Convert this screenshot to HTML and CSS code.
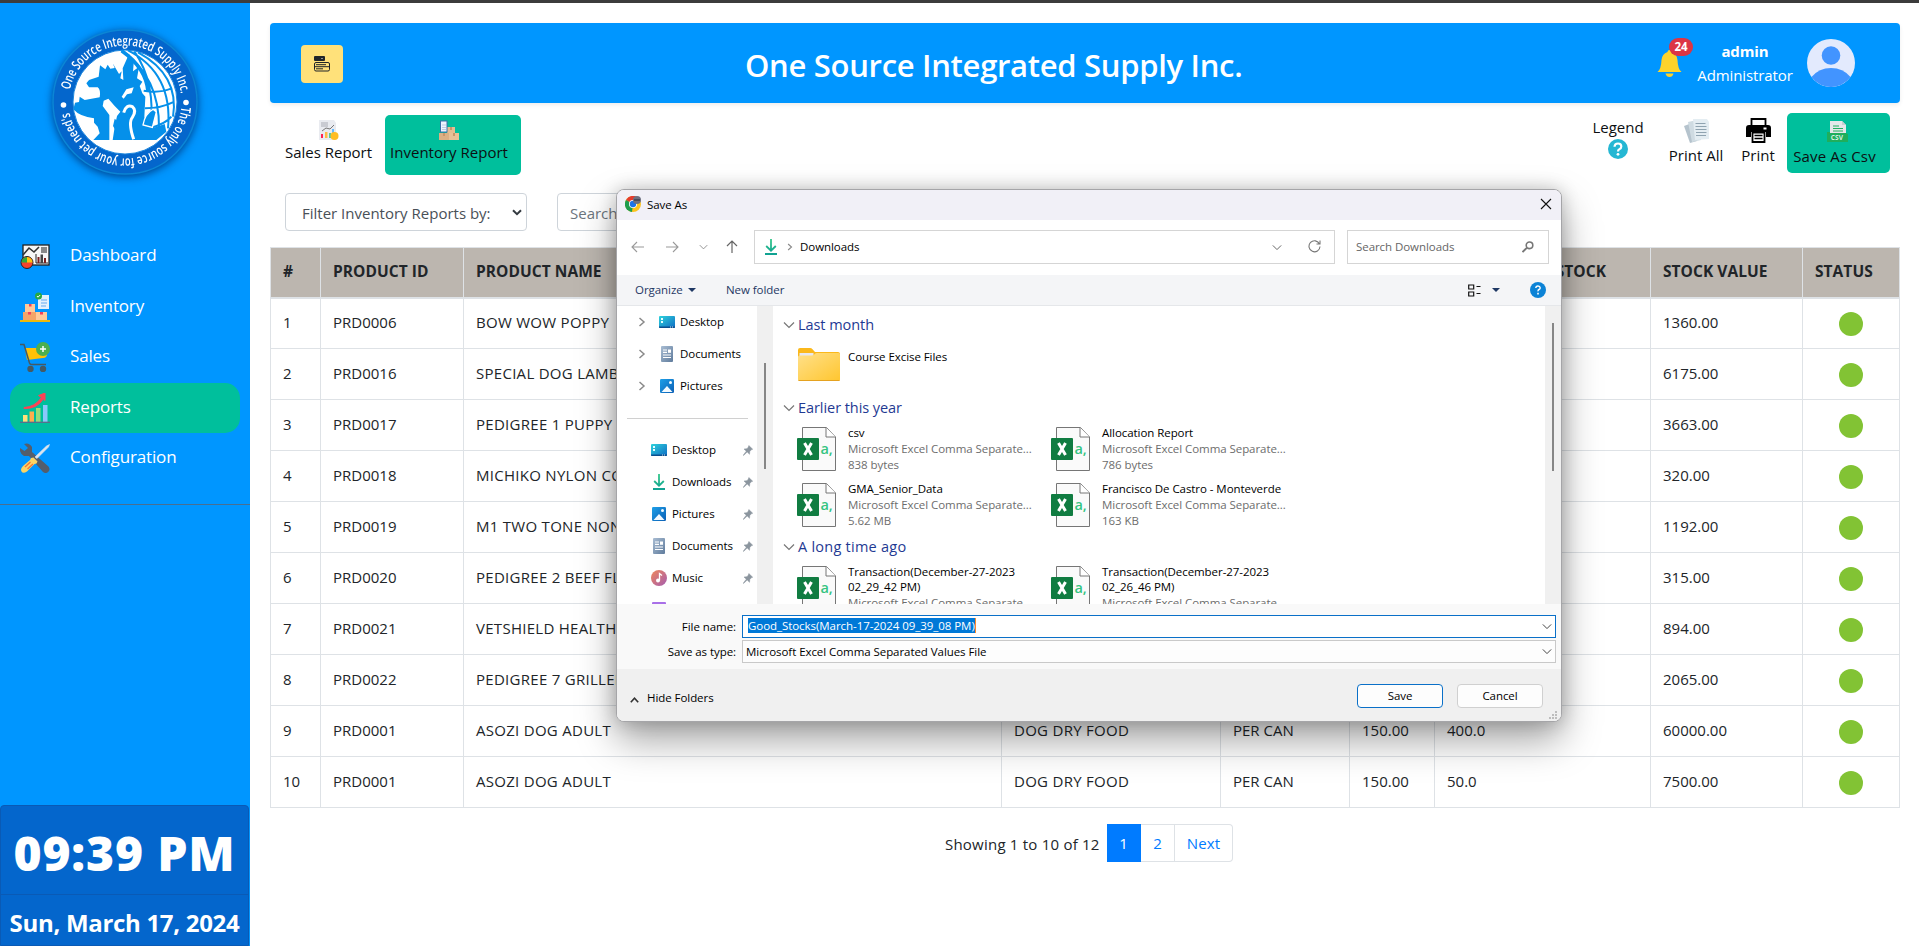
FILE: index.html
```html
<!DOCTYPE html>
<html lang="en">
<head>
<meta charset="utf-8">
<title>One Source Integrated Supply Inc.</title>
<link rel="stylesheet" href="styles.css">
</head>
<body>
<svg class="defs" width="0" height="0">
  <defs>
    <linearGradient id="g-desk" x1="0" y1="0" x2="1" y2="1"><stop offset="0" stop-color="#2fd3dc"/><stop offset="1" stop-color="#0f6cc4"/></linearGradient>
    <linearGradient id="g-doc" x1="0" y1="0" x2="1" y2="1"><stop offset="0" stop-color="#a9bdd3"/><stop offset="1" stop-color="#5f7b9c"/></linearGradient>
    <linearGradient id="g-pic" x1="0" y1="0" x2="1" y2="1"><stop offset="0" stop-color="#1ea0e8"/><stop offset="1" stop-color="#0c5fb5"/></linearGradient>
    <linearGradient id="g-mus" x1="0" y1="0" x2="1" y2="1"><stop offset="0" stop-color="#f0885a"/><stop offset="1" stop-color="#a55cb0"/></linearGradient>
    <linearGradient id="g-fold" x1="0" y1="0" x2="1" y2="1"><stop offset="0" stop-color="#ffe08a"/><stop offset="1" stop-color="#ffc62f"/></linearGradient>
    <linearGradient id="g-down" x1="0" y1="0" x2="0" y2="1"><stop offset="0" stop-color="#35c88a"/><stop offset="1" stop-color="#10a292"/></linearGradient>
  </defs>
  <symbol id="i-desk" viewBox="0 0 16 16"><rect y="2" width="16" height="12" rx="1" fill="url(#g-desk)"/><path d="M2 4h2v2H2zM2 7h2v2H2z" fill="#e6ffff"/><path d="M0 12.5h16V13a1 1 0 0 1-1 1H1a1 1 0 0 1-1-1z" fill="#0a4f8f"/><path d="M11 13h1M13 13h1" stroke="#fff" stroke-width=".8"/></symbol>
  <symbol id="i-doc" viewBox="0 0 16 16"><rect x="2" width="12" height="16" rx="1" fill="url(#g-doc)"/><path d="M4 4h4M4 6.3h4M4 9h8M4 11.5h8" stroke="#fff" stroke-width="1.2"/><path d="M9 3.5h3v3.3H9z" fill="#fff"/></symbol>
  <symbol id="i-pic" viewBox="0 0 16 16"><rect x="1" y="1" width="14" height="14" rx="1.2" fill="url(#g-pic)"/><path d="M2.5 14 8 8l5.500 6z" fill="#f3faff"/><circle cx="11.500" cy="4.500" r="1.500" fill="#f3faff"/></symbol>
  <symbol id="i-down" viewBox="0 0 16 16"><path d="M8 0v11.500M3.200 7 8 11.700 12.800 7M2 15h12" fill="none" stroke="url(#g-down)" stroke-width="1.800"/></symbol>
  <symbol id="i-music" viewBox="0 0 16 16"><circle cx="8" cy="8" r="8" fill="url(#g-mus)"/><circle cx="7" cy="10.500" r="2" fill="#fff"/><path d="M8.500 10.500V3.500l2.500 2" fill="none" stroke="#fff" stroke-width="1.300"/></symbol>
  <symbol id="i-pin" viewBox="0 0 10 11"><path d="M5.800.5 9.700 4.200 8.300 4.800 6.800 6.400 6.500 9.300 4.200 7 .5 10.500.2 10.200 3.300 6.200 1 4 4 3.700 5.400 2z" fill="#8b959e" stroke="#8b959e" stroke-width=".5"/></symbol>
  <symbol id="i-right" viewBox="0 0 8 10"><path d="M1.500 1 6 5 1.500 9" fill="none" stroke="#8a8a8a" stroke-width="1.500"/></symbol>
  <symbol id="i-chev" viewBox="0 0 12 8"><path d="M1 1.500 6 6.500l5-5" fill="none" stroke="currentColor" stroke-width="1.200"/></symbol>
  <symbol id="i-csv" viewBox="0 0 40 44">
    <path d="M5.500.500h24l9 9.500v33.500h-33z" fill="#fafafa" stroke="#767676"/><path d="M29 .5V10h9.500" fill="#fff" stroke="#767676"/>
    <rect y="11" width="22" height="22" rx="1" fill="#107c41"/><path d="m7.500 16 7 12M14.500 16l-7 12" stroke="#fff" stroke-width="3"/>
    <text x="23.500" y="27" font-size="14.500" font-weight="600" fill="#35c481">a,</text>
  </symbol>
  <symbol id="i-folder" viewBox="0 0 42 33"><path d="M0 2a2 2 0 0 1 2-2h10q1.500 0 2.500 1.200L17 4h23a2 2 0 0 1 2 2v4H0z" fill="#fbb81b"/><rect x="1.500" y="5" width="14" height="4" fill="#e8e8ee"/><path d="M0 9q0-1.500 1.500-1.500h12.500Q16 7.500 17 5.800 17.600 5 19 5h21.500q1.500 0 1.500 1.500V31.500Q42 33 40.500 33h-39Q0 33 0 31.500z" fill="url(#g-fold)"/><path d="M.5 32.500h41" stroke="#e5a220"/></symbol>
</svg>

<div class="topline"></div>
<div class="app">
  <aside class="sidebar">
    <svg class="logo" viewBox="0 0 156 156">
      <circle cx="78" cy="78" r="72" fill="#0466cc" stroke="#0b86d6" stroke-width="1.500"/>
      <circle cx="78" cy="78" r="52" fill="#fff" stroke="#1b86dd" stroke-width="1"/>
      <g transform="translate(-47.300 -24) scale(.3333)">
        <path d="M365 151Q480 230 478 385M385 151Q520 220 505 385M404 154Q470 250 452 390M415 157Q540 225 520 350M432 272Q480 280 514 266M436 325Q485 325 524 305M450 385Q500 370 515 350" fill="none" stroke="#0590ea" stroke-width="6"/>
        <path d="M366 152Q440 205 445 275" fill="none" stroke="#0590ea" stroke-width="11"/>
        <path d="M260 250 268 240 297 230 301 196 317 208 324 194 332 206 345 204 339 190 358 222 366 214 362 235 371 240 369 205 388 162 402 190 400 214 418 200 412 235 428 245 420 258 428 280 437 290 434 350Q440 375 460 384L495 372 500 395 470 420H281L300 400 294 380 283 368 283 355Q240 350 221 328L226 308 238 306 240 290 255 300 300 292Q304 270 294 262L268 262Z" fill="#0590ea"/>
        <path d="M309 318 312 302 326 296 345 318 362 335 352 348 345 380 339 420H329V345Z" fill="#fff"/>
        <path d="M366 290 380 268 402 262 396 280 382 283 372 296Z" fill="#fff"/>
        <path d="M372 338Q380 312 398 320 412 332 398 352 385 368 402 418" fill="none" stroke="#fff" stroke-width="9"/>
        <path d="M430 375Q436 340 460 328L470 336 458 382Z" fill="#0590ea" stroke="#fff" stroke-width="4"/>
        <path d="M345 356 352 362 360 360Q362 376 378 384 392 398 386 418L345 419 350 395 340 378Z" fill="#0590ea"/>
      </g>
      <path id="ring" d="M21.500 78a56.500 56.500 0 0 1 113 0a56.500 56.500 0 0 1-113 0" fill="none"/>
      <text class="logo-text"><textPath href="#ring" startOffset="12" textLength="157" lengthAdjust="spacingAndGlyphs">One Source Integrated Supply Inc.</textPath></text>
      <text class="logo-text"><textPath href="#ring" startOffset="182" textLength="162" lengthAdjust="spacingAndGlyphs">The only source for your pet need's</textPath></text>
      <circle cx="16.500" cy="81" r="2.800" fill="#fff"/><circle cx="139" cy="78.500" r="2.800" fill="#fff"/>
    </svg>
    <nav class="menu">
      <a class="item"><svg viewBox="0 0 30 30"><rect x="3" y="4" width="26" height="20" fill="#f7f7f7" stroke="#222" stroke-width="1.300"/><path d="m3 14 6-7 5 4 5-5" fill="none" stroke="#333" stroke-width="1.600"/><path d="M21 6h6v6h-6z" fill="#888"/><path d="M16 13v9h12" fill="none" stroke="#222"/><path d="M17.500 16h2v6h-2zM24 17h2v5h-2z" fill="#7c2020"/><path d="M20.500 13.500h2.500V22h-2.500z" fill="#444"/><circle cx="7" cy="21.500" r="6" fill="#f5432c" stroke="#222"/><path d="M7 21.500v-5.500a5.500 5.500 0 0 1 5.500 5.500z" fill="#ffc20e"/><path d="M7 21.500v-5.500a5.500 5.500 0 0 0-5.500 5.500z" fill="#31a938"/></svg><span>Dashboard</span></a>
      <a class="item"><svg viewBox="0 0 30 30"><path d="M18 3h11v14H18z" fill="#e4f0fc"/><path d="M21 8h6M21 11h6M21 14h5" stroke="#64a9f0"/><circle cx="18.500" cy="4" r="3.500" fill="#27a844"/><path d="m17 4 1 1.200L20.200 3" fill="none" stroke="#fff"/><path d="M5 12h10v8H5z" fill="#ffc999"/><path d="M3 20h13v8H3z" fill="#f5a468"/><path d="M16 20h11v8H16z" fill="#ffc999"/><path d="M9 12h2.500v2.500H9zM8 20h3v2.500H8zM20 20h3v2.500h-3z" fill="#f23f5d"/><path d="M0 28h30v2H0z" fill="#eeb90c"/></svg><span>Inventory</span></a>
      <a class="item"><svg viewBox="0 0 30 30"><path d="M5 6h22v6q0 4-4 4l-16 2z" fill="#ffc107"/><path d="M0 2.500h4L9.500 21q.5 1.500 2 1.500H26" fill="none" stroke="#455a64" stroke-width="1.500"/><circle cx="10.500" cy="27" r="3.200" fill="#455a64"/><circle cx="23" cy="27" r="3.200" fill="#455a64"/><circle cx="23" cy="7" r="7" fill="#4caf50"/><path d="M23 4v6M20 7h6" stroke="#fff" stroke-width="1.500"/></svg><span>Sales</span></a>
      <a class="item active"><svg viewBox="0 0 30 30"><path d="M3 22h4.500v7H3z" fill="#ffe17a"/><path d="M9.500 18.500H14V29H9.500z" fill="#ffad4e"/><path d="M16 15h4.500v14H16z" fill="#96dc7b"/><path d="M23 12h4.500v17H23z" fill="#8cc7fb"/><path d="M0 29.300h30" stroke="#5a6d8c" stroke-width="1.300"/><path d="M4 14.500Q15 14 21.500 4.500L18.500 2.500 25 0 25 7.500 23.300 6Q17 16 4 15.500z" fill="#ff4155" stroke="#ff4155"/></svg><span>Reports</span></a>
      <a class="item"><svg viewBox="0 0 30 30"><path d="M4 1Q9-1 12 4V9L28.500 23.500Q31 27 27.500 29.500 25 31 22.500 28.500L9 13H4Q-1 10 0 5l4.500 3L8 5z" fill="#545e6c"/><path d="m29.500 1.500-3 1.500L15 14l2 1.500L28.500 4z" fill="#dfe5ee" stroke="#dfe5ee" stroke-width=".6"/><path d="m13.500 14.500 4 4-1 2-2 .5L7 28.500Q3 31 1.500 28.500 0 26 3 23l7-6 1-2z" fill="#fcd462"/><path d="m5 24 5.500-5M7.500 26l5.500-5" stroke="#f0713e" stroke-width="1.300"/></svg><span>Configuration</span></a>
    </nav>
    <div class="clock"><div class="time">09:39 PM</div><div class="date">Sun, March 17, 2024</div></div>
  </aside>

  <main class="main">
    <header class="header">
      <button class="toggle"><svg width="16" height="16" viewBox="0 0 16 16"><rect width="11" height="5" rx="1" fill="#212529"/><path d="m7 2 1 1 1-1z" fill="#fff"/><rect x=".5" y="6.500" width="15" height="8.500" rx="1.500" fill="none" stroke="#212529"/><path d="M2 8.700h10M1 10.700h14M2 12.800h7" stroke="#212529"/></svg></button>
      <h1>One Source Integrated Supply Inc.</h1>
      <div class="user">
        <div class="bell"><svg width="25" height="27" viewBox="0 0 25 27"><path d="M12.500 0q2 0 2 2 5.500 2 6 8 .3 9 4 12H.5q3.700-3 4-12 .5-6 6-8 0-2 2-2z" fill="#fdd32b"/><path d="M8.500 23.500h8q-1 3.500-4 3.500t-4-3.500z" fill="#fdd32b"/></svg><span class="count">24</span></div>
        <div class="who"><b>admin</b><span>Administrator</span></div>
        <svg class="avatar" viewBox="0 0 48 48"><circle cx="24" cy="24" r="24" fill="#e3eafd"/><circle cx="24" cy="16.500" r="9.300" fill="#4294ff"/><path d="M4.500 38Q12 29 24 29t19.500 9A24 24 0 0 1 4.500 38z" fill="#4294ff"/></svg>
      </div>
    </header>

    <div class="actions">
      <a class="tab sales"><svg viewBox="0 0 20 20"><path d="M0 0h15l2 3v17H0z" fill="#e9ebf0"/><path d="M2 2h7v5H2z" fill="#c9cbd2"/><path d="m3 11 4-3 4 1 4-4" fill="none" stroke="#777"/><path d="M2 14h2v4H2z" fill="#f25"/><path d="M6 12h2.500v6H6z" fill="#fb4"/><path d="M10 13h2v5h-2z" fill="#5c9"/><path d="M13 9h2v6h-2z" fill="#6bf"/><circle cx="15.500" cy="16" r="4" fill="#ffbd25"/></svg><span>Sales Report</span></a>
      <a class="tab inv"><svg viewBox="0 0 20 20"><path d="M8 7h8v6H8z" fill="#e5bd92"/><path d="M0 13h10v7H0z" fill="#dcb084"/><path d="M10 13h10v7H10z" fill="#e8c197"/><path d="M11 7h2v3h-2zM4 13h2v3H4zM14 13h2v3h-2z" fill="#c9956a"/><rect x="1.500" y="1" width="6.500" height="11" fill="#eef3ff" stroke="#3b6ea8"/><path d="M3 5h4M3 7.500h4M3 9.500h4" stroke="#a9bcd6" stroke-width=".7"/></svg><span>Inventory Report</span></a>
      <div class="spacer"></div>
      <a class="act legend"><span>Legend</span><svg width="20" height="20" viewBox="0 0 20 20"><circle cx="10" cy="10" r="10" fill="#25b7d3"/><path d="M6.500 7.800Q6.700 4.500 10 4.500t3.300 3q0 1.600-1.800 2.600-1.500.8-1.500 2.300" fill="none" stroke="#fff" stroke-width="2.200"/><circle cx="10" cy="15.300" r="1.400" fill="#fff"/></svg></a>
      <a class="act printall"><svg width="25" height="25" viewBox="0 0 25 25"><path d="m0 8 8-3 5 18-7 2z" fill="#b5c3cd"/><path d="m4 4 9-2 4 20-9 2z" fill="#cfdbe2"/><path d="M9 1h14l2 3v17l-14 1z" fill="#e4edf2"/><path d="M11.500 5.500h10M11.500 8.500h11M11.500 11.500h11M12 14.500h10.500M12 17.500h10" stroke="#8fa3b0" stroke-width="1.100"/></svg><span>Print All</span></a>
      <a class="act print"><svg width="25" height="25" viewBox="0 0 25 25"><path d="M5.500 7V1h14v6" fill="#fff" stroke="#000" stroke-width="1.800"/><path d="M3 7h19q3 0 3 3v9h-5v-5H5v5H0v-9q0-3 3-3z"/><path d="M17.500 9.500h3v2h-3z" fill="#fff"/><path d="M6.500 14.500h12V24h-12z" fill="#fff" stroke="#000" stroke-width="1.800"/><path d="M8.500 17.500h8M8.500 20.500h8" stroke="#000" stroke-width="1.500"/></svg><span>Print</span></a>
      <a class="act csv"><svg width="21" height="21" viewBox="0 0 21 21"><path d="M3 0h12l4 4v8H3z" fill="#e4e7ea"/><path d="M15 0v4h4z" fill="#c9cdd2"/><path d="M6 5h6M6 7.500h10M6 10h10" stroke="#20b060"/><path d="M0 11h3v1h16l2 1v8H0z" fill="#1fae5c"/><text x="3.800" y="19" font-size="6.500" font-weight="700" fill="#d8f0e2">CSV</text></svg><span>Save As Csv</span></a>
    </div>

    <div class="filters">
      <div class="select"><span>Filter Inventory Reports by:</span><svg width="10" height="7" viewBox="0 0 10 7"><path d="m1 1.200 4 4 4-4" fill="none" stroke="#343a40" stroke-width="2"/></svg></div>
      <div class="search">Search</div>
    </div>

    <table class="stock">
      <colgroup><col class="c1"><col class="c2"><col class="c3"><col class="c4"><col class="c5"><col class="c6"><col class="c7"><col class="c8"><col class="c9"></colgroup>
      <thead><tr><th>#</th><th>PRODUCT ID</th><th>PRODUCT NAME</th><th>CATEGORY</th><th>UNIT</th><th>PRICE</th><th class="instock">TOTAL STOCK</th><th>STOCK VALUE</th><th>STATUS</th></tr></thead>
      <tbody>
        <tr><td>1</td><td>PRD0006</td><td>BOW WOW POPPY</td><td></td><td></td><td></td><td></td><td>1360.00</td><td><i></i></td></tr>
        <tr><td>2</td><td>PRD0016</td><td>SPECIAL DOG LAMB</td><td></td><td></td><td></td><td></td><td>6175.00</td><td><i></i></td></tr>
        <tr><td>3</td><td>PRD0017</td><td>PEDIGREE 1 PUPPY C</td><td></td><td></td><td></td><td></td><td>3663.00</td><td><i></i></td></tr>
        <tr><td>4</td><td>PRD0018</td><td>MICHIKO NYLON CO</td><td></td><td></td><td></td><td></td><td>320.00</td><td><i></i></td></tr>
        <tr><td>5</td><td>PRD0019</td><td>M1 TWO TONE NON</td><td></td><td></td><td></td><td></td><td>1192.00</td><td><i></i></td></tr>
        <tr><td>6</td><td>PRD0020</td><td>PEDIGREE 2 BEEF FL</td><td></td><td></td><td></td><td></td><td>315.00</td><td><i></i></td></tr>
        <tr><td>7</td><td>PRD0021</td><td>VETSHIELD HEALTH</td><td></td><td></td><td></td><td></td><td>894.00</td><td><i></i></td></tr>
        <tr><td>8</td><td>PRD0022</td><td>PEDIGREE 7 GRILLED</td><td></td><td></td><td></td><td></td><td>2065.00</td><td><i></i></td></tr>
        <tr><td>9</td><td>PRD0001</td><td>ASOZI DOG ADULT</td><td>DOG DRY FOOD</td><td>PER CAN</td><td>150.00</td><td>400.0</td><td>60000.00</td><td><i></i></td></tr>
        <tr><td>10</td><td>PRD0001</td><td>ASOZI DOG ADULT</td><td>DOG DRY FOOD</td><td>PER CAN</td><td>150.00</td><td>50.0</td><td>7500.00</td><td><i></i></td></tr>
      </tbody>
    </table>

    <div class="pager"><span class="info">Showing 1 to 10 of 12</span><a class="on">1</a><a>2</a><a class="next">Next</a></div>
  </main>
</div>

<section class="dialog">
  <div class="titlebar">
    <svg width="16" height="16" viewBox="0 0 16 16"><circle cx="8" cy="8" r="8" fill="#fcc31e"/><path d="M8 8 1 4A8 8 0 0 1 15 4z" fill="#e33b2e"/><path d="M8 8 1 4a8 8 0 0 0 6 12z" fill="#1f9d4d"/><circle cx="8" cy="8" r="4" fill="#fff"/><circle cx="8" cy="8" r="3.200" fill="#1a73e8"/><circle cx="12" cy="4" r="4" fill="#6d6f80"/><path d="M9 4h6" stroke="#252838"/></svg>
    <span>Save As</span>
    <svg class="close" width="12" height="12" viewBox="0 0 12 12"><path d="m1 1 10 10M11 1 1 11" stroke="#111" stroke-width="1.100"/></svg>
  </div>
  <div class="navrow">
    <svg class="n1" width="13" height="12" viewBox="0 0 13 12"><path d="M13 6H1M6 1 1 6l5 5" fill="none" stroke="#9a9a9a" stroke-width="1.100"/></svg>
    <svg class="n2" width="13" height="12" viewBox="0 0 13 12"><path d="M0 6h12M7 1l5 5-5 5" fill="none" stroke="#9a9a9a" stroke-width="1.100"/></svg>
    <svg class="n3" width="9" height="6"><use href="#i-chev"/></svg>
    <svg class="n4" width="12" height="13" viewBox="0 0 12 13"><path d="M6 13V1M1 6l5-5 5 5" fill="none" stroke="#666" stroke-width="1.200"/></svg>
    <div class="address"><svg width="16" height="16"><use href="#i-down"/></svg><svg class="a2" width="6" height="8"><use href="#i-right"/></svg><span>Downloads</span><svg class="a3" width="10" height="7"><use href="#i-chev"/></svg><svg width="13" height="13" viewBox="0 0 13 13"><path d="M11.500 4A5.500 5.500 0 1 0 12 6.500M12 .5V4H8.500" fill="none" stroke="#777" stroke-width="1.100"/></svg></div>
    <div class="find"><span>Search Downloads</span><svg width="12" height="12" viewBox="0 0 12 12"><circle cx="7.500" cy="4.300" r="3.300" fill="none" stroke="#777" stroke-width="1.600"/><path d="M5 6.700.5 11.200" stroke="#777" stroke-width="1.900"/></svg></div>
  </div>
  <div class="toolbar">
    <span class="org">Organize</span><i class="tri"></i><span class="newf">New folder</span>
    <svg class="view" width="13" height="13" viewBox="0 0 13 13"><path d="M.7 1h5v4h-5zM.7 8h5v4h-5z" fill="none" stroke="#111" stroke-width="1.200"/><path d="M8.500 2.500h4M8.500 9.500h4" stroke="#111" stroke-width="1.200"/></svg><i class="tri tri2"></i>
    <svg width="16" height="16" viewBox="0 0 16 16"><circle cx="8" cy="8" r="8" fill="#0c83d6"/><path d="M5.800 6Q6 4 8 4t2.200 1.900q0 1-1.200 1.600T8 9.300" fill="none" stroke="#fff" stroke-width="1.400"/><path d="M7.200 10.800h1.600v1.600H7.200z" fill="#fff"/></svg>
  </div>
  <div class="panes">
    <div class="tree">
      <div class="node"><svg class="ar" width="8" height="10"><use href="#i-right"/></svg><svg class="ic" width="16" height="16"><use href="#i-desk"/></svg>Desktop</div>
      <div class="node"><svg class="ar" width="8" height="10"><use href="#i-right"/></svg><svg class="ic" width="16" height="16"><use href="#i-doc"/></svg>Documents</div>
      <div class="node"><svg class="ar" width="8" height="10"><use href="#i-right"/></svg><svg class="ic" width="16" height="16"><use href="#i-pic"/></svg>Pictures</div>
      <div class="rule"></div>
      <div class="quick"><svg class="ic" width="16" height="16"><use href="#i-desk"/></svg>Desktop<svg class="pin" width="10" height="11"><use href="#i-pin"/></svg></div>
      <div class="quick"><svg class="ic" width="16" height="16"><use href="#i-down"/></svg>Downloads<svg class="pin" width="10" height="11"><use href="#i-pin"/></svg></div>
      <div class="quick"><svg class="ic" width="16" height="16"><use href="#i-pic"/></svg>Pictures<svg class="pin" width="10" height="11"><use href="#i-pin"/></svg></div>
      <div class="quick"><svg class="ic" width="16" height="16"><use href="#i-doc"/></svg>Documents<svg class="pin" width="10" height="11"><use href="#i-pin"/></svg></div>
      <div class="quick"><svg class="ic" width="16" height="16"><use href="#i-music"/></svg>Music<svg class="pin" width="10" height="11"><use href="#i-pin"/></svg></div>
      <div class="quick"><svg class="ic" width="16" height="16" viewBox="0 0 16 16"><rect x="1" y="0" width="14" height="14" rx="1" fill="#a970e8"/></svg></div>
    </div>
    <div class="track t1"><i></i></div>
    <div class="files">
      <div class="group g1"><svg width="12" height="8"><use href="#i-chev"/></svg>Last month</div>
      <div class="row r1"><div class="file folder"><svg width="42" height="33"><use href="#i-folder"/></svg><div><b>Course Excise Files</b></div></div></div>
      <div class="group g2"><svg width="12" height="8"><use href="#i-chev"/></svg>Earlier this year</div>
      <div class="row r2">
        <div class="file"><svg width="40" height="44"><use href="#i-csv"/></svg><div><b>csv</b><span>Microsoft Excel Comma Separate...</span><span>838 bytes</span></div></div>
        <div class="file"><svg width="40" height="44"><use href="#i-csv"/></svg><div><b>Allocation Report</b><span>Microsoft Excel Comma Separate...</span><span>786 bytes</span></div></div>
      </div>
      <div class="row r3">
        <div class="file"><svg width="40" height="44"><use href="#i-csv"/></svg><div><b>GMA_Senior_Data</b><span>Microsoft Excel Comma Separate...</span><span>5.62 MB</span></div></div>
        <div class="file"><svg width="40" height="44"><use href="#i-csv"/></svg><div><b>Francisco De Castro - Monteverde</b><span>Microsoft Excel Comma Separate...</span><span>163 KB</span></div></div>
      </div>
      <div class="group g3"><svg width="12" height="8"><use href="#i-chev"/></svg>A long time ago</div>
      <div class="row r4">
        <div class="file"><svg width="40" height="44"><use href="#i-csv"/></svg><div><b>Transaction(December-27-2023<br>02_29_42 PM)</b><span>Microsoft Excel Comma Separate...</span></div></div>
        <div class="file"><svg width="40" height="44"><use href="#i-csv"/></svg><div><b>Transaction(December-27-2023<br>02_26_46 PM)</b><span>Microsoft Excel Comma Separate...</span></div></div>
      </div>
    </div>
    <div class="track t2"><i></i></div>
  </div>
  <div class="fields">
    <label>File name:</label><div class="field focus"><span class="sel">Good_Stocks(March-17-2024 09_39_08 PM)</span><svg width="10" height="7"><use href="#i-chev"/></svg></div>
    <label>Save as type:</label><div class="field"><span>Microsoft Excel Comma Separated Values File</span><svg width="10" height="7"><use href="#i-chev"/></svg></div>
  </div>
  <div class="foot">
    <svg width="9" height="6" viewBox="0 0 9 6"><path d="m.8 5.200 3.700-4 3.700 4" fill="none" stroke="#333" stroke-width="1.600"/></svg><span class="hide">Hide Folders</span>
    <button class="btn primary">Save</button><button class="btn">Cancel</button>
    <svg class="grip" width="8" height="8" viewBox="0 0 8 8"><path d="M6 0h2v2H6zM3 3h2v2H3zM6 3h2v2H6zM0 6h2v2H0zM3 6h2v2H3zM6 6h2v2H6z" fill="#bdbdbd"/></svg>
  </div>
</section>
</body>
</html>
```
FILE: styles.css
```css
* { box-sizing: border-box; }
body { margin: 0; height: 946px; overflow: hidden; background: #fff; color: #212529; font-family: "Open Sans", "Noto Sans", sans-serif; font-size: 15px; line-height: 24px; display: flex; flex-direction: column; }
svg { display: block; flex: none; }
.defs { position: absolute; }
.topline { height: 3px; background: #3c3c3c; flex: none; }
.app { display: flex; flex: 1; min-height: 0; }

/* Sidebar */
.sidebar { width: 250px; background: #0096ff; display: flex; flex-direction: column; flex: none; }
.logo { width: 156px; height: 156px; margin: 21px 0 0 47px; overflow: visible; filter: drop-shadow(0 2px 4px rgba(0,30,90,.7)); }
.logo-text { font: 600 13.500px "Open Sans", sans-serif; fill: #fff; }
.menu { margin-top: 51px; height: 273.500px; border-bottom: 1px solid #4a6f90; padding: 0 10px; }
.item { display: flex; align-items: center; height: 50px; margin-bottom: .6px; padding: 0 10px; border-radius: 15px; color: #fff; font-size: 17px; letter-spacing: -.15px; }
.item svg { width: 30px; height: 30px; margin-right: 20px; }
.item span { margin-top: -2px; }
.item.active { background: #00bf9c; }
.clock { margin-top: auto; width: 249px; height: 141px; background: #0466cc; border: 1px solid #0a5ab5; border-radius: 4px 4px 0 0; color: #fff; font-weight: 800; text-align: center; white-space: nowrap; }
.time { height: 89px; line-height: 94px; font-size: 48px; letter-spacing: .8px; border-bottom: 1px solid #0a5ab5; }
.date { line-height: 56px; font-size: 24px; font-weight: 700; letter-spacing: -.3px; }

/* Page */
.main { flex: 1; padding: 20px 20px 0 20px; display: flex; flex-direction: column; }
.header { display: flex; align-items: center; height: 80px; background: #0096ff; border-radius: 4px; color: #fff; padding: 0 45px 0 31px; box-shadow: 0 2px 4px rgba(0,0,0,.075); }
.toggle { width: 42px; height: 38px; border: 0; border-radius: 4px; background: #ffe17a; display: flex; align-items: center; justify-content: center; padding: 0; margin-top: 1px; }
.header h1 { margin: 3px 0 0 402px; width: 496px; text-align: center; white-space: nowrap; font-size: 31px; font-weight: 600; letter-spacing: -.3px; }
.user { margin-left: auto; display: flex; align-items: center; }
.bell { position: relative; margin-right: 14px; }
.count { position: absolute; left: 12px; top: -12px; width: 24px; height: 18px; border-radius: 9px; background: #dc3545; font-size: 11.500px; font-weight: 700; line-height: 18px; text-align: center; }
.who { width: 98px; text-align: center; display: flex; flex-direction: column; margin-right: 13px; letter-spacing: -.1px; }
.avatar { width: 48px; height: 48px; }

.actions { display: flex; align-items: flex-start; height: 90px; padding: 10px 10px 0 10px; color: #0c0f12; white-space: nowrap; }
.tab { height: 60px; margin-top: 2px; border-radius: 5px; display: flex; flex-direction: column; align-items: center; padding-top: 5px; }
.tab svg { width: 20px; height: 20px; }
.sales { width: 97px; }
.inv { width: 136px; background: #00bf9c; margin-left: 8px; }
.inv span { margin-right: 8px; }
.inv svg { margin-right: 8px; }
.spacer { flex: 1; }
.act { display: flex; flex-direction: column; align-items: center; }
.legend { width: 54px; margin: 2px 22px 0 0; }
.printall { width: 58px; margin: 5px 16px 0 0; }
.print { width: 34px; margin: 5px 12px 0 0; }
.csv { width: 103px; height: 60px; background: #00bf9c; border-radius: 5px; padding: 8px 8px 0 0; gap: 2px; letter-spacing: .15px; }
.csv svg { margin-left: 6px; }

.filters { display: flex; margin-left: 15px; gap: 30px; height: 54px; color: #495057; }
.select, .search { height: 38px; border: 1px solid #ced4da; border-radius: 4px; display: flex; align-items: center; }
.select { width: 242px; padding: 0 4px 0 16px; justify-content: space-between; }
.select span { margin-top: 2px; }
.search { width: 250px; padding: 2px 12px 0; color: #6c757d; }

.stock { width: 1629px; table-layout: fixed; border-collapse: collapse; }
.stock th, .stock td { border: 1px solid #dee2e6; padding: 0 12px 2px; text-align: left; height: 51px; white-space: nowrap; }
.stock th { background: #bcb6af; height: 50px; border-bottom-width: 2px; font-weight: 700; font-size: 15.500px; letter-spacing: .05px; }
.stock td:nth-child(3), .stock td:nth-child(4) { letter-spacing: .28px; }
.stock .instock { text-align: right; padding-right: 44px; }
.stock i { display: block; width: 24px; height: 24px; border-radius: 50%; background: #82c334; margin: 3px auto 0; }
.c1 { width: 50px; } .c2 { width: 143px; } .c3 { width: 538px; } .c4 { width: 219px; } .c5 { width: 129px; } .c6 { width: 85px; } .c7 { width: 216px; } .c8 { width: 152px; } .c9 { width: 97px; }

.pager { display: flex; margin: 16px 0 0 675px; height: 38px; line-height: 36px; }
.pager .info { width: 162px; line-height: 40px; white-space: nowrap; letter-spacing: .22px; }
.pager a { border: 1px solid #dee2e6; border-left: 0; width: 34px; text-align: center; color: #007bff; }
.pager .on { background: #007bff; border-color: #007bff; color: #fff; }
.pager .next { width: 58px; border-radius: 0 4px 4px 0; letter-spacing: .2px; }

/* Save dialog */
.dialog { position: absolute; left: 616px; top: 189px; width: 946px; height: 533px; border: 1px solid #a5a5a8; border-radius: 8px; background: #fff; overflow: hidden; box-shadow: 0 18px 38px rgba(0,0,0,.36), 0 0 18px rgba(0,0,0,.2); color: #000; font-size: 11.500px; letter-spacing: -.06px; line-height: 16px; display: flex; flex-direction: column; white-space: nowrap; }
.titlebar { display: flex; align-items: center; height: 30px; background: #f1f0f7; padding: 0 9px 2px 8px; gap: 6px; flex: none; }
.titlebar span { margin-top: 2px; }
.close { margin-left: auto; }
.navrow { display: flex; align-items: center; height: 55px; padding: 0 0 2px 14px; flex: none; color: #8a8a8a; }
.n2 { margin-left: 22px; } .n3 { margin-left: 20px; } .n4 { margin-left: 18px; }
.address, .find { height: 34px; border: 1px solid #d5d5d5; display: flex; align-items: center; }
.address { width: 581px; margin-left: 16px; padding: 0 13px 0 8px; }
.address span { color: #000; margin-left: 7px; }
.a2 { margin-left: 8px; } .a3 { margin: 2px 26px 0 auto; color: #666; }
.find { width: 202px; margin-left: 12px; padding: 0 14px 0 8px; justify-content: space-between; color: #666; }
.toolbar { display: flex; align-items: center; height: 31px; background: #f4f5f7; border-bottom: 1px solid #e5e7ea; padding: 0 15px 0 18px; color: #1f3864; flex: none; }
.tri { border: 4px solid transparent; border-top: 4px solid #1f3864; border-bottom: 0; }
.org { width: 53px; } .newf { margin-left: 30px; } .view { margin-left: auto; } .tri2 { margin: 0 30px 0 11px; }
.panes { display: flex; height: 298px; overflow: hidden; flex: none; }
.tree { width: 140px; }
.node, .quick { display: flex; align-items: center; height: 32px; }
.node { padding-left: 21px; }
.ar { margin-right: 13px; } .ic { margin-right: 5px; }
.quick { padding: 0 4px 0 34px; }
.pin { margin-left: auto; }
.rule { height: 1px; background: #d0d0d0; margin: 16px 9px 15px 10px; }
.track { width: 16px; background: #f0f0f0; padding-left: 7px; }
.track i { display: block; width: 2px; background: #868686; }
.t1 i { height: 106px; margin-top: 57px; }
.t2 i { height: 148px; margin-top: 17px; }
.files { width: 772px; padding-left: 10px; }
.group { display: flex; align-items: center; gap: 3px; color: #1f3a93; font-size: 14.500px; height: 20px; }
.g3 { letter-spacing: .25px; }
.group svg { color: #777; }
.g1 { margin-top: 9px; } .g2 { margin-top: 17px; } .g3 { margin-top: 10px; }
.row { display: flex; padding-left: 14px; }
.r1 { margin-top: 13px; height: 33px; }
.r2 { margin-top: 9px; height: 56px; }
.r3 { height: 44px; }
.r4 { margin-top: 9px; }
.file { width: 254px; display: flex; gap: 11px; }
.file b { font-weight: 400; display: block; line-height: 15px; margin-top: -2px; padding-bottom: 1px; }
.file span { display: block; color: #6d6d6d; }
.folder { padding-left: 1px; gap: 8px; }
.folder b { margin-top: 1px; }
.fields { height: 65px; background: #f9f9f9; display: grid; grid-template-columns: 119px 814px; grid-template-rows: 23px 23px; column-gap: 6px; row-gap: 2px; padding-top: 11px; align-items: center; flex: none; }
.fields label { text-align: right; margin-top: 1px; }
.field { height: 23px; border: 1px solid #c9c9c9; background: #fdfdfd; display: flex; align-items: center; justify-content: space-between; padding: 0 3px 0 3px; color: #000; }
.field svg { color: #444; }
.focus { border-color: #0a70c8; background: #fff; padding-left: 5px; }
.sel { background: #0078d7; color: #fff; border-right: 1px solid #ff8a28; line-height: 15px; margin-top: -2px; }
.foot { flex: 1; background: #f0f0f0; display: flex; align-items: flex-start; padding: 15px 4px 0 13px; }
.foot > svg:first-child { margin-top: 13px; }
.hide { margin: 6px 0 0 8px; }
.btn { width: 86px; height: 24px; margin-left: 14px; border: 1px solid #d0d0d0; border-radius: 4px; background: #fdfdfd; font: inherit; letter-spacing: inherit; color: #000; padding: 0; }
.primary { border-color: #0a70c8; margin-left: auto; }
.grip { margin: 27px 0 0 6px; }
```
